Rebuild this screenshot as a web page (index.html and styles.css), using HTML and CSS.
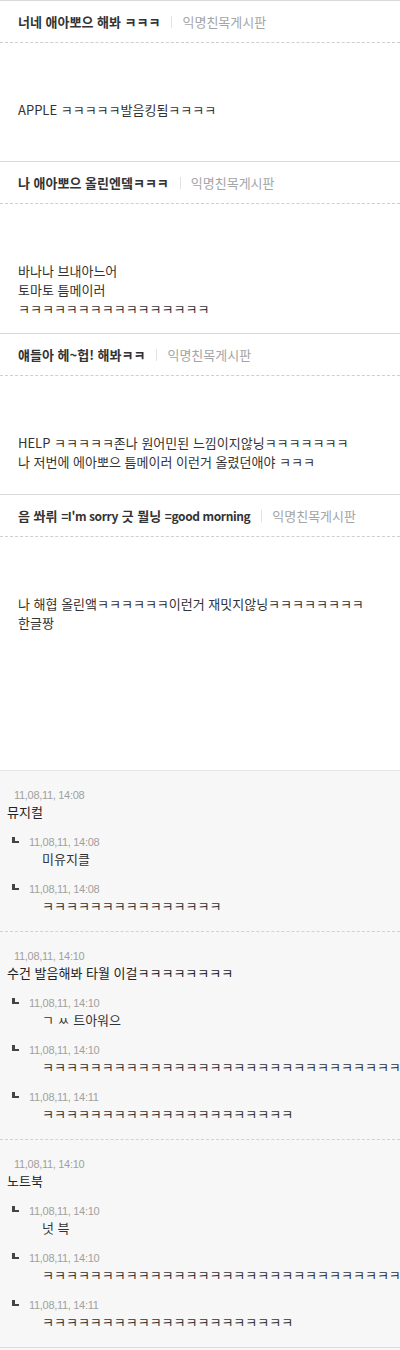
FILE: index.html
```html
<!DOCTYPE html>
<html lang="ko">
<head>
<meta charset="utf-8">
<title>익명친목게시판</title>
<link rel="stylesheet" href="styles.css">
</head>
<body>
<div class="page">
  <div class="post">
    <div class="post-head"><span class="post-title">너네 애아뽀으 해봐 ㅋㅋㅋ</span><span class="sep"></span><span class="board">익명친목게시판</span></div>
    <div class="post-body">
      <div class="line">APPLE ㅋㅋㅋㅋㅋ발음킹됨ㅋㅋㅋㅋ</div>
    </div>
  </div>
  <div class="post">
    <div class="post-head"><span class="post-title">나 애아뽀으 올린엔뎈ㅋㅋㅋ</span><span class="sep"></span><span class="board">익명친목게시판</span></div>
    <div class="post-body">
      <div class="line">바나나 브내아느어</div>
      <div class="line">토마토 틈메이러</div>
      <div class="line">ㅋㅋㅋㅋㅋㅋㅋㅋㅋㅋㅋㅋㅋㅋㅋㅋ</div>
    </div>
  </div>
  <div class="post">
    <div class="post-head"><span class="post-title">얘들아 헤~헙! 해봐ㅋㅋ</span><span class="sep"></span><span class="board">익명친목게시판</span></div>
    <div class="post-body">
      <div class="line">HELP ㅋㅋㅋㅋㅋ존나 원어민된 느낌이지않닝ㅋㅋㅋㅋㅋㅋㅋ</div>
      <div class="line">나 저번에 에아뽀으 틈메이러 이런거 올렸던애야 ㅋㅋㅋ</div>
    </div>
  </div>
  <div class="post">
    <div class="post-head"><span class="post-title">음 쏴뤼 <span class="en">=I'm sorry</span> 긋 뭘닝 <span class="en">=good morning</span></span><span class="sep"></span><span class="board">익명친목게시판</span></div>
    <div class="post-body">
      <div class="line">나 해협 올린앸ㅋㅋㅋㅋㅋㅋ이런거 재밋지않닝ㅋㅋㅋㅋㅋㅋㅋㅋ</div>
      <div class="line">한글짱</div>
    </div>
  </div>

  <div class="comments">
    <div class="comment">
      <div class="date">11,08,11, 14:08</div>
      <div class="c-text">뮤지컬</div>
      <div class="reply">
        <div class="reply-head"><span class="reply-icon"></span><span class="date">11,08,11, 14:08</span></div>
        <div class="r-text">미유지클</div>
      </div>
      <div class="reply">
        <div class="reply-head"><span class="reply-icon"></span><span class="date">11,08,11, 14:08</span></div>
        <div class="r-text">ㅋㅋㅋㅋㅋㅋㅋㅋㅋㅋㅋㅋㅋㅋㅋ</div>
      </div>
    </div>
    <div class="comment">
      <div class="date">11,08,11, 14:10</div>
      <div class="c-text">수건 발음해봐 타월 이걸ㅋㅋㅋㅋㅋㅋㅋㅋ</div>
      <div class="reply">
        <div class="reply-head"><span class="reply-icon"></span><span class="date">11,08,11, 14:10</span></div>
        <div class="r-text">ㄱ ㅆ 트아워으</div>
      </div>
      <div class="reply">
        <div class="reply-head"><span class="reply-icon"></span><span class="date">11,08,11, 14:10</span></div>
        <div class="r-text">ㅋㅋㅋㅋㅋㅋㅋㅋㅋㅋㅋㅋㅋㅋㅋㅋㅋㅋㅋㅋㅋㅋㅋㅋㅋㅋㅋㅋㅋㅋㅋㅋㅋㅋㅋ</div>
      </div>
      <div class="reply">
        <div class="reply-head"><span class="reply-icon"></span><span class="date">11,08,11, 14:11</span></div>
        <div class="r-text">ㅋㅋㅋㅋㅋㅋㅋㅋㅋㅋㅋㅋㅋㅋㅋㅋㅋㅋㅋㅋㅋ</div>
      </div>
    </div>
    <div class="comment">
      <div class="date">11,08,11, 14:10</div>
      <div class="c-text">노트북</div>
      <div class="reply">
        <div class="reply-head"><span class="reply-icon"></span><span class="date">11,08,11, 14:10</span></div>
        <div class="r-text">넛 븍</div>
      </div>
      <div class="reply">
        <div class="reply-head"><span class="reply-icon"></span><span class="date">11,08,11, 14:10</span></div>
        <div class="r-text">ㅋㅋㅋㅋㅋㅋㅋㅋㅋㅋㅋㅋㅋㅋㅋㅋㅋㅋㅋㅋㅋㅋㅋㅋㅋㅋㅋㅋㅋㅋㅋㅋㅋㅋㅋ</div>
      </div>
      <div class="reply">
        <div class="reply-head"><span class="reply-icon"></span><span class="date">11,08,11, 14:11</span></div>
        <div class="r-text">ㅋㅋㅋㅋㅋㅋㅋㅋㅋㅋㅋㅋㅋㅋㅋㅋㅋㅋㅋㅋㅋ</div>
      </div>
    </div>
  </div>
</div>
</body>
</html>
```
FILE: styles.css
```css
html, body {
  margin: 0;
  padding: 0;
  background: #fff;
}
body {
  font-family: "Noto Sans CJK KR", "Noto Sans", sans-serif;
  font-size: 13px;
  color: #333;
}
.page {
  width: 400px;
  overflow: hidden;
}
.post {
  border-top: 1px solid #d9d9d9;
}
.post-head {
  display: flex;
  align-items: center;
  height: 16px;
  padding: 13px 18px 12px;
  border-bottom: 1px dashed #cfcfcf;
  line-height: 16px;
  white-space: nowrap;
}
.post-title {
  font-weight: bold;
  color: #333;
}
.en {
  font-size: 12px;
  letter-spacing: -0.4px;
}
.sep {
  width: 1px;
  height: 12px;
  background: #e2e2e2;
  margin: 0 10px 0 11px;
}
.board {
  color: #a5a5a5;
}
.post-body {
  box-sizing: border-box;
  min-height: 118px;
  padding: 57px 18px 15px;
  line-height: 19px;
}
.line {
  white-space: nowrap;
}
.comments {
  margin-top: 115px;
  background: #f7f7f7;
  border-top: 1px solid #e6e6e6;
  overflow: hidden;
  padding-bottom: 10px;
}
.comment {
  padding: 17px 0 15px 7px;
  border-bottom: 1px dashed #d2d2d2;
}
.comment:last-child {
  border-bottom: 1px solid #dcdcdc;
}
.date {
  font-family: "Liberation Sans", Arial, sans-serif;
  font-size: 11px;
  letter-spacing: -0.3px;
  line-height: 14px;
  height: 14px;
  color: #a0a0a0;
  white-space: nowrap;
}
.comment > .date {
  padding-left: 7px;
}
.c-text {
  line-height: 20px;
  color: #222;
  white-space: nowrap;
}
.reply {
  margin-top: 13px;
  padding-left: 5px;
}
.reply-head {
  display: flex;
  align-items: center;
  height: 14px;
}
.reply-icon {
  width: 4px;
  height: 4px;
  border-left: 3px solid #444;
  border-bottom: 2px solid #444;
  margin: -4px 10px 0 0;
}
.r-text {
  padding-left: 30px;
  line-height: 20px;
  color: #333;
  white-space: nowrap;
}
```
